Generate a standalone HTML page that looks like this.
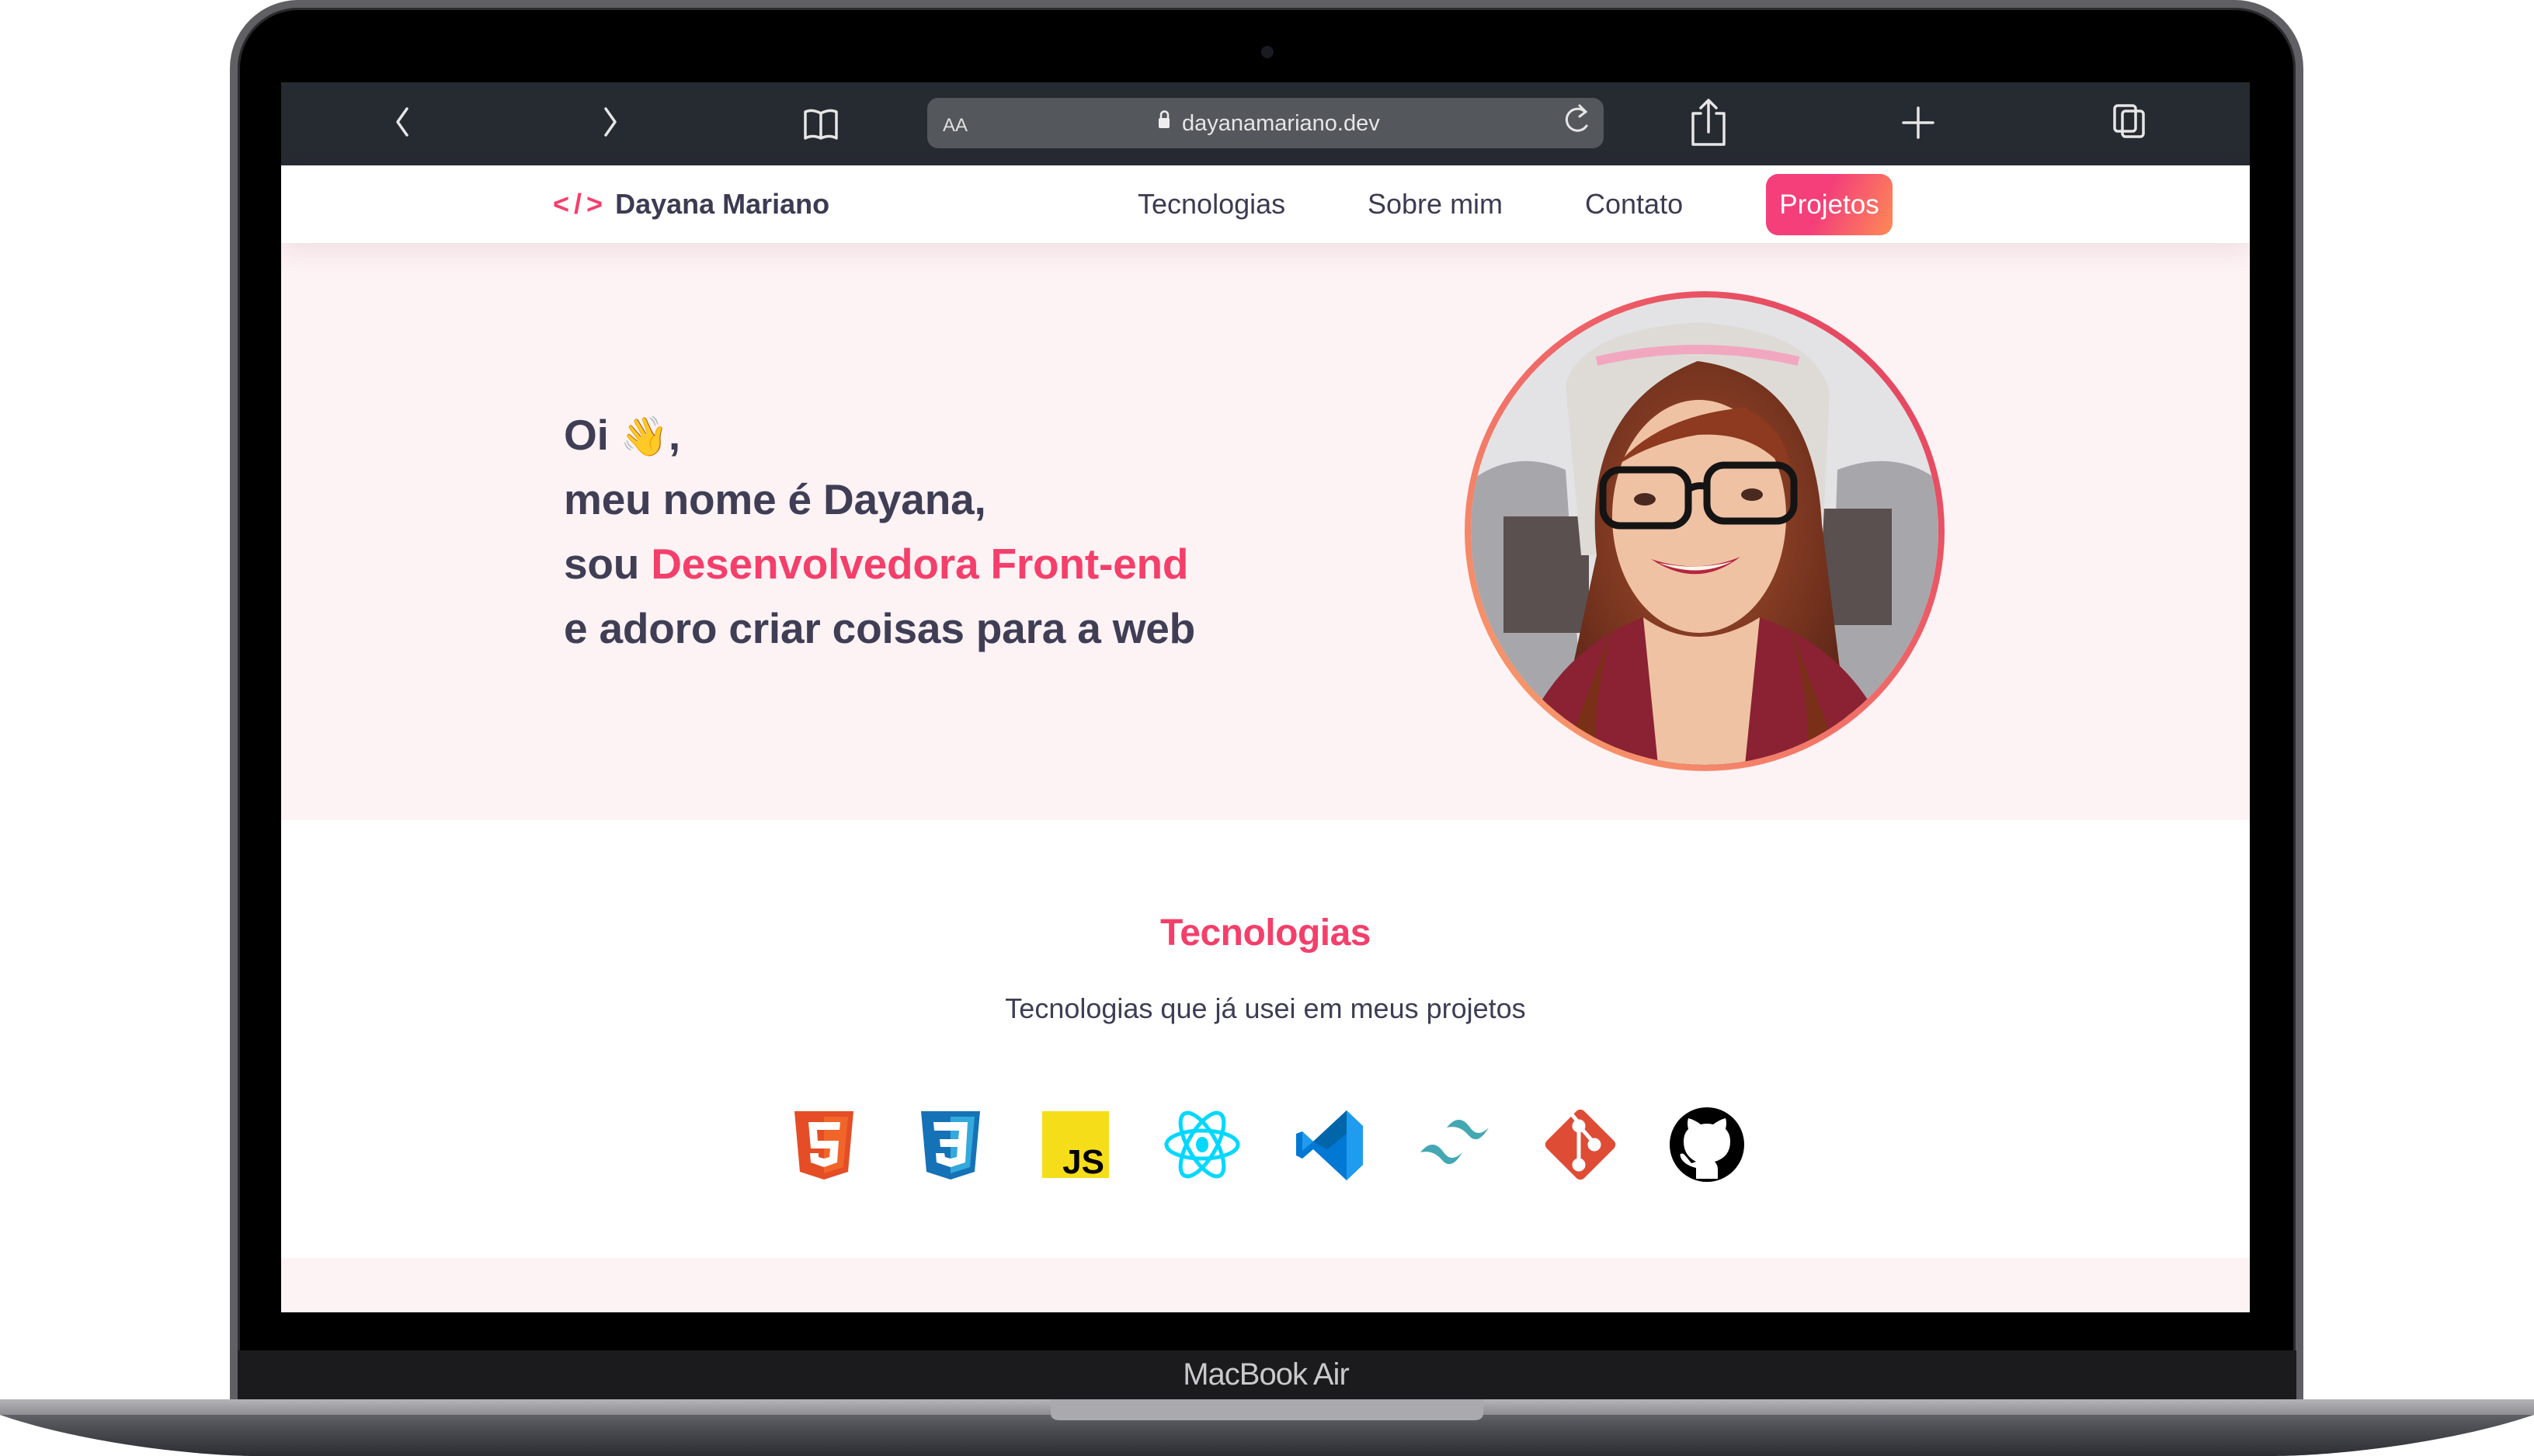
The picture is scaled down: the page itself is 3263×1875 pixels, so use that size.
<!DOCTYPE html>
<html><head><meta charset="utf-8">
<style>
*{margin:0;padding:0;box-sizing:border-box}
body{width:3263px;height:1875px;background:#fff;position:relative;overflow:hidden;font-family:"Liberation Sans",sans-serif}
.abs{position:absolute}
#lid{left:296px;top:0;width:2670px;height:1810px;background:#000;border:10px solid #5f5f64;border-bottom:none;border-radius:88px 88px 0 0;box-shadow:inset 0 0 0 3px #2a2a2d}
#chin{left:306px;top:1739px;width:2651px;height:64px;background:#1b1b1d}
#screen{left:362px;top:106px;width:2535px;height:1584px;background:#fff;overflow:hidden}
#toolbar{left:0;top:0;width:2535px;height:107px;background:#262a31}
#nav{left:0;top:107px;width:2535px;height:100px;background:#fff;box-shadow:0 10px 30px rgba(120,60,80,0.10);z-index:2}
#hero{left:0;top:207px;width:2535px;height:743px;background:#fdf2f4}
#tech{left:0;top:950px;width:2535px;height:564px;background:#fff}
#pinkb{left:0;top:1514px;width:2535px;height:80px;background:#fdf2f4}
.navl{font-size:36px;color:#3c3b52;top:137px;line-height:40px}
.h{font-weight:bold;font-size:55px;color:#3f3e55;left:364px;line-height:60px;letter-spacing:-0.2px;white-space:nowrap}
</style></head><body>
<div id="lid" class="abs"></div>
<div class="abs" style="left:1624px;top:59px;width:16px;height:16px;border-radius:50%;background:#1a1a22"></div>
<div id="chin" class="abs"></div>
<div class="abs" style="left:1300px;top:1748px;width:660px;text-align:center;color:#c9c9cc;font-size:40px;letter-spacing:-1px">MacBook Air</div>

<svg class="abs" style="left:0;top:1800px" width="3263" height="75" viewBox="0 0 3263 75">
<defs>
<linearGradient id="bd" x1="0" y1="0" x2="0" y2="1"><stop offset="0" stop-color="#7b7c82"/><stop offset="0.4" stop-color="#55565c"/><stop offset="1" stop-color="#2c2d33"/></linearGradient>
<linearGradient id="bt" x1="0" y1="0" x2="0" y2="1"><stop offset="0" stop-color="#b4b4b8"/><stop offset="1" stop-color="#8e8e93"/></linearGradient>
</defs>
<path d="M0 2 H3263 V22 C3150 60 3000 75 2930 75 H330 C260 75 110 60 0 22 Z" fill="url(#bd)"/>
<rect x="0" y="2" width="3263" height="20" fill="url(#bt)"/>
<path d="M1353 2 H1910 V20 Q1910 29 1898 29 H1365 Q1353 29 1353 20 Z" fill="#a9a9ae"/>
</svg>

<div id="screen" class="abs">
 <div id="toolbar" class="abs">
  <svg class="abs" style="left:0;top:0" width="2535" height="107" viewBox="0 0 2535 107">
   <rect x="832" y="20" width="871" height="65" rx="14" fill="#54575c"/>
   <g fill="none" stroke="#e6e6e6" stroke-width="3.5" stroke-linecap="round" stroke-linejoin="round">
    <path d="M162 34 L150 51 L162 68"/>
    <path d="M418 34 L430 51 L418 68"/>
    <path d="M675 38 Q684 34 695 40 Q706 34 715 38 V72 Q706 67 695 72 Q684 67 675 72 Z M695 40 V72"/>
    <path d="M1828 40 h-10 v40 h40 v-40 h-10 M1838 24 v40 M1828 33 l10-10 10 10"/>
    <path d="M2108 33 v38 M2089 52 h38"/>
    <rect x="2371" y="37" width="27" height="33" rx="4"/>
    <rect x="2361" y="30" width="27" height="33" rx="4"/>
   </g>
   <g fill="none" stroke="#e6e6e6" stroke-width="3" stroke-linecap="round"><path d="M1679 38 A14 14 0 1 0 1681 56"/><path d="M1672 30 l8 8 -8 6"/></g>
   <text x="852" y="63" fill="#e0e0e0" font-size="24" font-family="Liberation Sans">AA</text>
   <rect x="1130" y="46" width="14" height="13" rx="2" fill="#eee"/><path d="M1133 47 v-5 a4.5 4.5 0 0 1 9 0 v5" stroke="#eee" stroke-width="2.5" fill="none"/>
   <text x="1160" y="62" fill="#e6e6e6" font-size="29" font-family="Liberation Sans">dayanamariano.dev</text>
  </svg>
 </div>
 <div id="nav" class="abs"></div>
 <div class="abs" style="left:350px;top:137px;font-size:36px;font-weight:bold;color:#3c3b52;z-index:3;line-height:40px;white-space:nowrap"><span style="color:#f43f6b;letter-spacing:6px">&lt;/&gt;</span> Dayana Mariano</div>
 <div class="abs navl" style="left:1103px;z-index:3">Tecnologias</div>
 <div class="abs navl" style="left:1399px;z-index:3">Sobre mim</div>
 <div class="abs navl" style="left:1679px;z-index:3">Contato</div>
 <div class="abs" style="left:1912px;top:118px;width:163px;height:79px;border-radius:16px;background:linear-gradient(115deg,#f43f7a 45%,#fd8a55);color:#fff;font-size:35px;text-align:center;line-height:79px;z-index:3">Projetos</div>

 <div id="hero" class="abs"></div>
 <div class="abs h" style="top:424px">Oi <span style="font-size:50px">👋</span>,</div>
 <div class="abs h" style="top:507px">meu nome é Dayana,</div>
 <div class="abs h" style="top:590px">sou <span style="color:#f43f6b">Desenvolvedora Front-end</span></div>
 <div class="abs h" style="top:673px">e adoro criar coisas para a web</div>

 <svg class="abs" style="left:1524px;top:269px" width="618" height="618" viewBox="0 0 618 618">
  <defs>
   <linearGradient id="rg" x1="0" y1="1" x2="1" y2="0"><stop offset="0" stop-color="#f9a56a"/><stop offset="0.5" stop-color="#f06a68"/><stop offset="1" stop-color="#e23a5f"/></linearGradient>
   <clipPath id="cc"><circle cx="309" cy="309" r="301"/></clipPath>
   <radialGradient id="hair" cx="0.5" cy="0.4" r="0.6"><stop offset="0" stop-color="#a8502e"/><stop offset="1" stop-color="#5a2416"/></radialGradient>
  </defs>
  <circle cx="309" cy="309" r="309" fill="url(#rg)"/>
  <g clip-path="url(#cc)">
   <rect width="618" height="618" fill="#e3e3e6"/>
   <path d="M0 250 Q60 200 130 230 L150 520 L0 560 Z" fill="#a7a7ab"/>
   <path d="M618 250 Q560 200 480 230 L470 520 L618 560 Z" fill="#a7a7ab"/>
   <rect x="50" y="290" width="110" height="150" fill="#5a5050"/>
   <rect x="450" y="280" width="100" height="150" fill="#5a5050"/>
   <path d="M130 120 Q150 50 300 40 Q450 50 470 130 L460 340 L150 340 Z" fill="#dedbd7"/>
   <path d="M170 90 Q300 60 430 90" stroke="#f2a7c0" stroke-width="12" fill="none"/>
   <path d="M170 340 Q150 150 300 90 Q450 110 460 300 L500 620 L110 620 Z" fill="url(#hair)"/>
   <ellipse cx="302" cy="290" rx="112" ry="150" fill="#f0c2a4"/>
   <path d="M195 225 Q250 160 360 150 Q420 180 420 240 Q380 180 300 185 Q240 195 195 225Z" fill="#8e3a20"/>
   <path d="M60 620 Q100 470 230 420 Q300 470 380 420 Q520 470 560 620 Z" fill="#8a2233"/>
   <path d="M230 420 Q300 470 380 420 L360 620 L250 620 Z" fill="#f0c2a4"/>
   <path d="M200 410 Q160 520 170 620 L120 620 Z M410 410 Q450 520 440 620 L490 620Z" fill="#7a3018"/>
   <g fill="none" stroke="#141414" stroke-width="9">
    <rect x="178" y="230" width="110" height="72" rx="22"/>
    <rect x="312" y="224" width="112" height="72" rx="22"/>
    <path d="M288 255 Q300 248 312 252"/>
   </g>
   <ellipse cx="232" cy="268" rx="14" ry="8" fill="#4a2a20"/>
   <ellipse cx="370" cy="262" rx="14" ry="8" fill="#4a2a20"/>
   <path d="M240 345 Q300 385 355 342 Q300 365 240 345Z" fill="#b5253f"/>
   <path d="M250 350 Q300 370 345 348 Q300 360 250 350Z" fill="#fff6e8"/>
  </g>
 </svg>

 <div id="tech" class="abs"></div>
 <div class="abs" style="left:0;width:2535px;top:1068px;text-align:center;font-size:48px;font-weight:bold;color:#f43f6b;letter-spacing:-0.5px">Tecnologias</div>
 <div class="abs" style="left:0;width:2535px;top:1172px;text-align:center;font-size:36px;color:#3d3d55">Tecnologias que já usei em meus projetos</div>

 <svg class="abs" style="left:0;top:1310px" width="2535" height="120" viewBox="0 0 2535 120">
  <g transform="translate(661,15)">
   <path d="M0 0 H76 L69 78 L38 88 L7 78 Z" fill="#e44d26"/>
   <path d="M38 7 H69 L63 72 L38 80 Z" fill="#f16529"/>
   <path d="M18 14 H59 L58 24 H29 L30 38 H57 L55 66 L38 72 L21 66 L20 54 H31 L31 59 L38 61 L45 59 L46 48 H21 Z" fill="#fff"/>
  </g>
  <g transform="translate(824,15)">
   <path d="M0 0 H76 L69 78 L38 88 L7 78 Z" fill="#1572b6"/>
   <path d="M38 7 H69 L63 72 L38 80 Z" fill="#33a9dc"/>
   <path d="M16 14 H60 L57 66 L38 72 L20 66 L19 54 H30 L31 59 L38 61 L46 59 L47 46 H25 L24 36 H48 L49 25 H17 Z" fill="#fff"/>
  </g>
  <g transform="translate(980,15)">
   <rect width="86" height="86" fill="#f5de19"/>
   <text x="80" y="80" text-anchor="end" font-size="44" font-weight="bold" font-family="Liberation Sans" fill="#000">JS</text>
  </g>
  <g transform="translate(1186,58)" fill="none" stroke="#00d8ff" stroke-width="5">
   <ellipse rx="46" ry="18"/><ellipse rx="46" ry="18" transform="rotate(60)"/><ellipse rx="46" ry="18" transform="rotate(120)"/>
   <ellipse rx="8" ry="10" fill="#00d8ff" stroke="none"/>
  </g>
  <g transform="translate(1307,14)">
   <path d="M65 0 L86 20 V70 L65 90 L22 50 L8 62 L0 58 V30 L8 27 L22 40 Z" fill="#0078d4"/>
   <path d="M65 0 L86 20 V70 L65 90 Z" fill="#1f9cf0"/>
   <path d="M65 0 L65 30 L40 50 L22 40Z" fill="#0065a9"/>
   <path d="M8 27 L22 40 L8 52 Z" fill="#1f9cf0"/>
  </g>
  <g transform="translate(1511,58)" fill="#44a8b3">
   <path d="M-10 -22 Q6 -42 20 -22 Q30 -8 44 -22 Q30 2 18 -12 Q6 -26 -10 -22Z"/>
   <path d="M-44 10 Q-28 -10 -14 10 Q-4 24 10 10 Q-4 34 -16 20 Q-28 6 -44 10Z"/>
  </g>
  <g transform="translate(1673,58) rotate(45)">
   <rect x="-34" y="-34" width="68" height="68" rx="7" fill="#de4c36"/>
  </g>
  <g stroke="#fff" stroke-width="5" fill="#fff" transform="translate(1673,58)">
   <path d="M-12 -40 L-2 -28 M-2 -24 V22 M2 -20 L16 -4" fill="none"/>
   <circle cx="-2" cy="-24" r="6"/><circle cx="-2" cy="26" r="6"/><circle cx="18" cy="0" r="6"/>
  </g>
  <g transform="translate(1836,58)">
   <circle r="48" fill="#000"/>
   <path d="M-14 44 V30 Q-30 26 -34 16 Q-36 10 -30 12 Q-26 16 -20 24 L-14 22 Q-30 14 -30 -4 Q-30 -14 -24 -20 Q-26 -28 -24 -34 Q-16 -32 -8 -26 Q0 -28 8 -26 Q16 -32 24 -34 Q26 -28 24 -20 Q30 -14 30 -4 Q30 16 10 22 Q14 26 14 32 V44 Z" fill="#fff"/>
  </g>
 </svg>

 <div id="pinkb" class="abs"></div>
</div>
</body></html>
